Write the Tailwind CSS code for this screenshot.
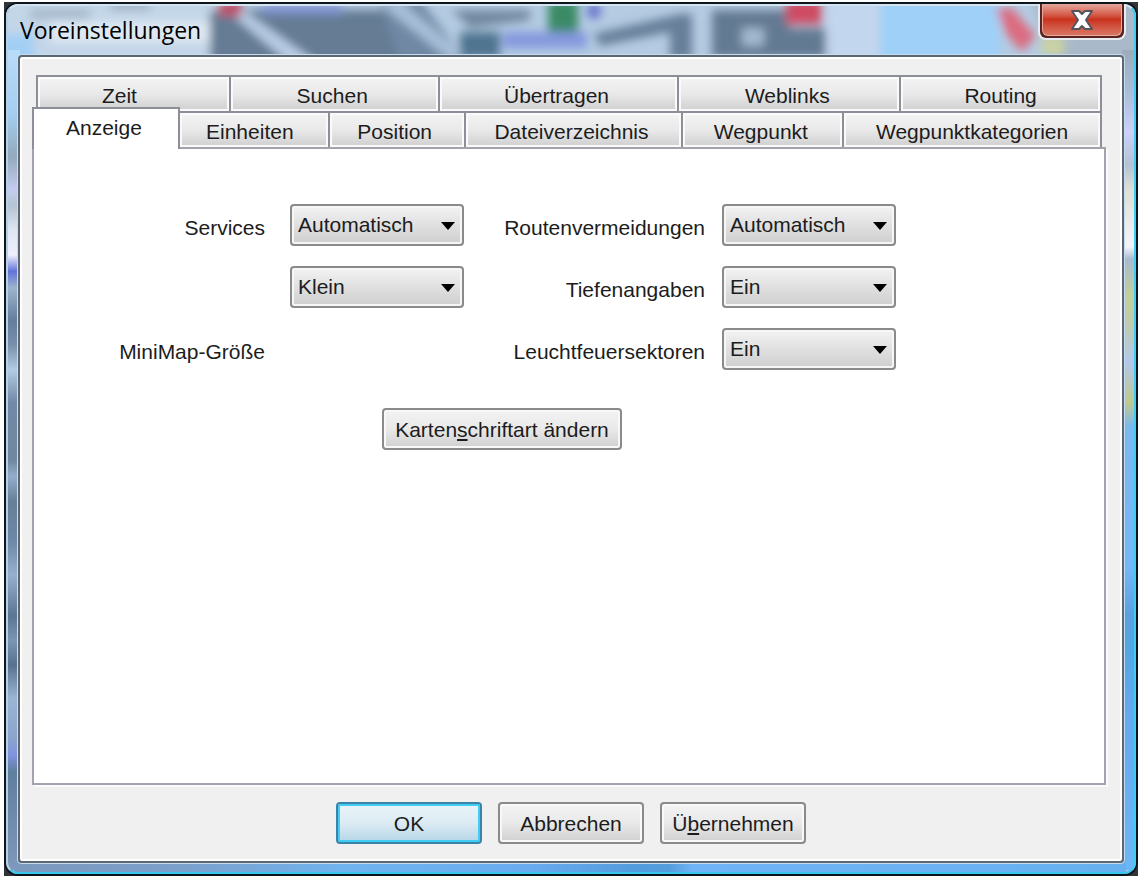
<!DOCTYPE html>
<html lang="de">
<head>
  <meta charset="UTF-8">
  <meta name="viewport" content="width=device-width, initial-scale=1.0">
  <title>Voreinstellungen</title>
  <script src="https://cdn.jsdelivr.net/npm/@tailwindcss/browser@4"></script>
</head>
<body class="bg-white h-screen flex pt-0.5 pb-1 pl-1 pr-[3px] font-['Liberation_Sans',sans-serif] text-[21px] leading-6 text-[#1c1c20]">

  <!-- Window frame -->
  <div class="flex-1 flex bg-[#30343a]">
    <div class="relative flex-1 flex flex-col overflow-hidden rounded-[14px] border-2 border-[#0c141c]">

      <!-- Map showing through the glass -->
      <svg class="absolute inset-0 w-full h-full" viewBox="6 4 1130 870" preserveAspectRatio="none" aria-hidden="true">
        <defs>
          <filter id="glass" x="-5%" y="-5%" width="110%" height="110%"><feGaussianBlur stdDeviation="5" /></filter>
          <linearGradient id="left" x1="0" y1="0" x2="0" y2="1">
            <stop offset="0" stop-color="#b9dcf8" />
            <stop offset=".08" stop-color="#a4cdf0" />
            <stop offset=".13" stop-color="#93a9bd" />
            <stop offset=".17" stop-color="#c3cdf0" />
            <stop offset=".19" stop-color="#b4c4d2" />
            <stop offset=".22" stop-color="#dfe6f4" />
            <stop offset=".25" stop-color="#eef0fc" />
            <stop offset=".27" stop-color="#6273d8" />
            <stop offset=".29" stop-color="#9db4ce" />
            <stop offset=".33" stop-color="#637d9c" />
            <stop offset=".36" stop-color="#7990ad" />
            <stop offset=".39" stop-color="#b2cbe6" />
            <stop offset=".43" stop-color="#7189a6" />
            <stop offset=".50" stop-color="#7087a2" />
            <stop offset=".52" stop-color="#93aecb" />
            <stop offset=".55" stop-color="#668099" />
            <stop offset=".60" stop-color="#6d88a8" />
            <stop offset=".64" stop-color="#97b0ce" />
            <stop offset=".69" stop-color="#5b7594" />
            <stop offset=".72" stop-color="#7b95b5" />
            <stop offset=".75" stop-color="#57718f" />
            <stop offset=".79" stop-color="#9ab5d4" />
            <stop offset=".84" stop-color="#8aa4cc" />
            <stop offset=".86" stop-color="#8093e0" />
            <stop offset=".88" stop-color="#5f7f9e" />
            <stop offset="1" stop-color="#7f98bc" />
          </linearGradient>
          <linearGradient id="right" x1="0" y1="0" x2="0" y2="1">
            <stop offset="0" stop-color="#9cabbc" />
            <stop offset=".05" stop-color="#a8bdd8" />
            <stop offset=".10" stop-color="#ccd0fa" />
            <stop offset=".14" stop-color="#b4c2d4" />
            <stop offset=".17" stop-color="#dde0d4" />
            <stop offset=".24" stop-color="#f4f4fb" />
            <stop offset=".255" stop-color="#a8bbd0" />
            <stop offset=".30" stop-color="#c3cf9c" />
            <stop offset=".33" stop-color="#c0cca8" />
            <stop offset=".38" stop-color="#b2c8ec" />
            <stop offset=".43" stop-color="#bfc98e" />
            <stop offset=".46" stop-color="#7ab8f0" />
            <stop offset=".63" stop-color="#74b8f8" />
            <stop offset=".69" stop-color="#5ba0de" />
            <stop offset=".73" stop-color="#52a6e4" />
            <stop offset=".80" stop-color="#62a9ee" />
            <stop offset="1" stop-color="#6cb6f6" />
          </linearGradient>
          <linearGradient id="bottom" x1="0" y1="0" x2="1" y2="0">
            <stop offset="0" stop-color="#7c98bc" />
            <stop offset=".15" stop-color="#7ba0cc" />
            <stop offset=".3" stop-color="#6fb4f0" />
            <stop offset=".46" stop-color="#6aacf0" />
            <stop offset=".56" stop-color="#529bdc" />
            <stop offset=".59" stop-color="#559ede" />
            <stop offset=".61" stop-color="#6fb4f6" />
            <stop offset="1" stop-color="#66b0f0" />
          </linearGradient>
        </defs>
        <rect x="6" y="4" width="1130" height="870" fill="#b4cbe2" />
        <g filter="url(#glass)">
          <rect x="-10" y="-10" width="240" height="80" fill="#c3d6e8" />
          <rect x="0" y="34" width="34" height="40" fill="#a3cff5" />
          <path d="M30 10H90V18H30zM110 0H150V10H110z" fill="#9eb0c2" />
          <rect x="50" y="22" width="160" height="20" fill="#dfe9f3" />
          <path d="M210 10H400L480 70H210z" fill="#657b94" />
          <path d="M240 8L330 72H300L236 18z" fill="#b9cee6" />
          <rect x="218" y="0" width="24" height="16" fill="#c0506a" />
          <rect x="262" y="4" width="80" height="10" fill="#8496d4" />
          <path d="M380 0H420L470 66H400z" fill="#7088a4" />
          <path d="M400 0L470 60H450L380 4z" fill="#a9c0da" />
          <path d="M452 10H530V20L470 28z" fill="#7288a0" />
          <path d="M460 32H500V58H460z" fill="#4f7590" />
          <rect x="503" y="32" width="84" height="16" fill="#8498de" />
          <rect x="548" y="0" width="30" height="32" fill="#3a8a66" />
          <rect x="588" y="4" width="12" height="14" fill="#6470cc" />
          <path d="M594 34L680 14H692V60H670V32L600 46z" fill="#687f9a" />
          <path d="M712 10H790V28H830V58H712z" fill="#647a93" />
          <rect x="742" y="28" width="22" height="18" fill="#a3b9d0" />
          <rect x="786" y="0" width="36" height="24" fill="#cf4c64" />
          <rect x="826" y="0" width="54" height="66" fill="#c2d6ee" />
          <rect x="880" y="0" width="120" height="66" fill="#9fd0f8" />
          <path d="M1030 0H1140V66H1060z" fill="#a9b9c9" />
          <path d="M996 8H1012L1036 36L1022 52L1006 34z" fill="#dc6c80" />
          <rect x="1042" y="36" width="22" height="20" fill="#c9d2a0" />
        </g>
        <rect x="6" y="50" width="14" height="820" fill="url(#left)" />
        <rect x="1122" y="50" width="14" height="820" fill="url(#right)" />
        <rect x="14" y="860" width="1112" height="14" fill="url(#bottom)" />
      </svg>

      <div class="relative flex-1 flex flex-col rounded-xl border-2 border-t-[#d3e3f0] border-l-[#b9cfe2] border-r-[#3fcdf6] border-b-[#36c6ee]">

        <!-- Title bar -->
        <header class="h-12 shrink-0 flex items-start justify-between pl-3 pr-2">
          <h1 class="self-center font-['Open_Sans',sans-serif] text-[23px] leading-8 text-black">Voreinstellungen</h1>
          <button type="button" aria-label="Schließen" class="-mt-0.5 w-[88px] h-9 rounded-b-lg border-2 border-t-0 border-[#e6ecf2] bg-[#5a2320] pb-0.5 px-0.5">
            <span class="flex h-full items-center justify-center rounded-b-md border border-t-0 border-[#e9a99c] bg-linear-to-b from-[#e3a79b] from-0% via-[#c9321d] via-50% to-[#d87462]">
              <svg class="w-6 h-6" viewBox="0 0 24 24" fill="none" aria-hidden="true">
                <path d="M2 3H9L12 6L15 3H22L16 12L22 21H15L12 18L9 21H2L8 12z" fill="#fff" stroke="#56545f" stroke-width="2" stroke-linejoin="round" />
              </svg>
            </span>
          </button>
        </header>

        <!-- Client area -->
        <div class="flex-1 flex mx-[9px] mb-2 rounded-sm border border-[#c6dcee]">
          <main class="flex-1 flex flex-col rounded-sm border-2 border-[#5c6772] bg-[#f0f0f0] pt-[18px] pb-[17px] shadow-[inset_0_0_0_2px_#ffffff]">

            <div class="flex-1 flex flex-col pl-3 pr-4">
              <div role="tablist" aria-label="Voreinstellungen">
                <div class="ml-1 mr-1 h-9 grid grid-cols-[193fr_209fr_240fr_222fr_201fr] border-r-2 border-[#8d8f98]">
                  <button type="button" role="tab" class="border-t-2 border-l-2 border-[#8d8f98] bg-linear-to-b from-[#f4f4f4] from-0% via-[#e9e9e9] via-50% to-[#cfcfcf] pt-1 pr-7 shadow-[inset_0_0_0_2px_#fafafa]">Zeit</button>
                  <button type="button" role="tab" class="border-t-2 border-l-2 border-[#8d8f98] bg-linear-to-b from-[#f4f4f4] from-0% via-[#e9e9e9] via-50% to-[#cfcfcf] pt-1 pr-1 shadow-[inset_0_0_0_2px_#fafafa]">Suchen</button>
                  <button type="button" role="tab" class="border-t-2 border-l-2 border-[#8d8f98] bg-linear-to-b from-[#f4f4f4] from-0% via-[#e9e9e9] via-50% to-[#cfcfcf] pt-1 pr-1 shadow-[inset_0_0_0_2px_#fafafa]">Übertragen</button>
                  <button type="button" role="tab" class="border-t-2 border-l-2 border-[#8d8f98] bg-linear-to-b from-[#f4f4f4] from-0% via-[#e9e9e9] via-50% to-[#cfcfcf] pt-1 pr-1 shadow-[inset_0_0_0_2px_#fafafa]">Weblinks</button>
                  <button type="button" role="tab" class="border-t-2 border-l-2 border-[#8d8f98] bg-linear-to-b from-[#f4f4f4] from-0% via-[#e9e9e9] via-50% to-[#cfcfcf] pt-1 shadow-[inset_0_0_0_2px_#fafafa]">Routing</button>
                </div>
                <div class="mr-1 h-9 grid grid-cols-[148fr_148fr_136fr_218fr_161fr_258fr] border-r-2 border-[#8d8f98]">
                  <button type="button" role="tab" aria-selected="true" class="relative z-10 -mt-1 -mb-0.5 border-2 border-b-0 border-[#8d8f98] bg-white pb-0.5 pr-1">Anzeige</button>
                  <button type="button" role="tab" class="border-t-2 border-[#8d8f98] bg-linear-to-b from-[#f4f4f4] from-0% via-[#e9e9e9] via-50% to-[#cfcfcf] pt-1 pr-2 shadow-[inset_0_0_0_2px_#fafafa]">Einheiten</button>
                  <button type="button" role="tab" class="border-t-2 border-l-2 border-[#8d8f98] bg-linear-to-b from-[#f4f4f4] from-0% via-[#e9e9e9] via-50% to-[#cfcfcf] pt-1 pr-1 shadow-[inset_0_0_0_2px_#fafafa]">Position</button>
                  <button type="button" role="tab" class="border-t-2 border-l-2 border-[#8d8f98] bg-linear-to-b from-[#f4f4f4] from-0% via-[#e9e9e9] via-50% to-[#cfcfcf] pt-1 pr-1 shadow-[inset_0_0_0_2px_#fafafa]">Dateiverzeichnis</button>
                  <button type="button" role="tab" class="border-t-2 border-l-2 border-[#8d8f98] bg-linear-to-b from-[#f4f4f4] from-0% via-[#e9e9e9] via-50% to-[#cfcfcf] pt-1 pr-1 shadow-[inset_0_0_0_2px_#fafafa]">Wegpunkt</button>
                  <button type="button" role="tab" class="border-t-2 border-l-2 border-[#8d8f98] bg-linear-to-b from-[#f4f4f4] from-0% via-[#e9e9e9] via-50% to-[#cfcfcf] pt-1 shadow-[inset_0_0_0_2px_#fafafa]">Wegpunktkategorien</button>
                </div>
              </div>

              <!-- Anzeige panel -->
              <section role="tabpanel" class="flex-1 border-2 border-[#a3a3ad] bg-white pt-[55px] shadow-[2px_2px_0_#fafafa]">
                <div class="grid grid-cols-[231px_199px_241px_191px] gap-y-5 items-center">
                  <label for="services" class="pt-1.5 text-right">Services</label>
                  <div class="relative ml-[25px]">
                    <select id="services" class="appearance-none w-full h-[42px] rounded-sm border-2 border-[#8a8a8a] bg-linear-to-b from-[#f3f3f3] to-[#cecece] pl-1.5 shadow-[inset_0_0_0_2px_#f6f6f6]"><option>Automatisch</option><option>Ein</option><option>Aus</option></select>
                    <svg class="absolute right-2 top-4 w-4 h-3 pointer-events-none" viewBox="0 0 16 12" aria-hidden="true"><path d="M1 2H15L8 10z" /></svg>
                  </div>
                  <label for="avoid" class="pt-1.5 text-right">Routenvermeidungen</label>
                  <div class="relative ml-[17px]">
                    <select id="avoid" class="appearance-none w-full h-[42px] rounded-sm border-2 border-[#8a8a8a] bg-linear-to-b from-[#f3f3f3] to-[#cecece] pl-1.5 shadow-[inset_0_0_0_2px_#f6f6f6]"><option>Automatisch</option><option>Ein</option><option>Aus</option></select>
                    <svg class="absolute right-2 top-4 w-4 h-3 pointer-events-none" viewBox="0 0 16 12" aria-hidden="true"><path d="M1 2H15L8 10z" /></svg>
                  </div>

                  <div class="relative col-start-2 ml-[25px]">
                    <select id="minimap" class="appearance-none w-full h-[42px] rounded-sm border-2 border-[#8a8a8a] bg-linear-to-b from-[#f3f3f3] to-[#cecece] pl-1.5 shadow-[inset_0_0_0_2px_#f6f6f6]"><option>Klein</option><option>Mittel</option><option>Groß</option></select>
                    <svg class="absolute right-2 top-4 w-4 h-3 pointer-events-none" viewBox="0 0 16 12" aria-hidden="true"><path d="M1 2H15L8 10z" /></svg>
                  </div>
                  <label for="depth" class="pt-1.5 text-right">Tiefenangaben</label>
                  <div class="relative ml-[17px]">
                    <select id="depth" class="appearance-none w-full h-[42px] rounded-sm border-2 border-[#8a8a8a] bg-linear-to-b from-[#f3f3f3] to-[#cecece] pl-1.5 shadow-[inset_0_0_0_2px_#f6f6f6]"><option>Ein</option><option>Aus</option></select>
                    <svg class="absolute right-2 top-4 w-4 h-3 pointer-events-none" viewBox="0 0 16 12" aria-hidden="true"><path d="M1 2H15L8 10z" /></svg>
                  </div>

                  <label for="minimap" class="pt-1.5 text-right">MiniMap-Größe</label>
                  <label for="lights" class="col-start-3 pt-1.5 text-right">Leuchtfeuersektoren</label>
                  <div class="relative ml-[17px]">
                    <select id="lights" class="appearance-none w-full h-[42px] rounded-sm border-2 border-[#8a8a8a] bg-linear-to-b from-[#f3f3f3] to-[#cecece] pl-1.5 shadow-[inset_0_0_0_2px_#f6f6f6]"><option>Ein</option><option>Aus</option></select>
                    <svg class="absolute right-2 top-4 w-4 h-3 pointer-events-none" viewBox="0 0 16 12" aria-hidden="true"><path d="M1 2H15L8 10z" /></svg>
                  </div>
                </div>
                <button type="button" class="block ml-[348px] mt-[38px] w-60 h-[42px] rounded-sm border-2 border-[#8a8a8a] bg-linear-to-b from-[#f3f3f3] from-0% via-[#e9e9e9] via-50% to-[#d0d0d0] pt-0.5 shadow-[inset_0_0_0_2px_#f8f8f8]">Karten<span class="underline underline-offset-2 decoration-2">s</span>chriftart ändern</button>
              </section>
            </div>

            <!-- Dialog buttons -->
            <footer class="mt-[17px] flex justify-center gap-4">
              <button type="button" class="w-[146px] h-[42px] rounded-sm border-2 border-[#3c83a8] bg-linear-to-b from-[#eaf4f9] from-0% via-[#dcebf3] via-50% to-[#b5d6e8] pt-0.5 shadow-[inset_0_0_0_2px_#3fcdf3]">OK</button>
              <button type="button" class="w-[146px] h-[42px] rounded-sm border-2 border-[#8a8a8a] bg-linear-to-b from-[#f3f3f3] from-0% via-[#e9e9e9] via-50% to-[#d0d0d0] pt-0.5 shadow-[inset_0_0_0_2px_#f8f8f8]">Abbrechen</button>
              <button type="button" class="w-[146px] h-[42px] rounded-sm border-2 border-[#8a8a8a] bg-linear-to-b from-[#f3f3f3] from-0% via-[#e9e9e9] via-50% to-[#d0d0d0] pt-0.5 shadow-[inset_0_0_0_2px_#f8f8f8]">Ü<span class="underline underline-offset-2 decoration-2">b</span>ernehmen</button>
            </footer>
          </main>
        </div>
      </div>
    </div>
  </div>

</body>
</html>
